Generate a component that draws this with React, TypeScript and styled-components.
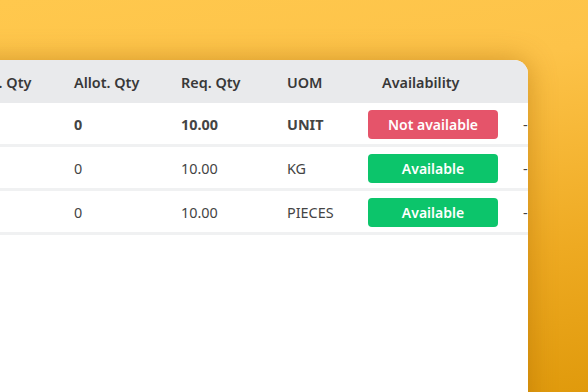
import React from 'react';
import styled, { createGlobalStyle } from 'styled-components';

const GlobalStyle = createGlobalStyle`
  html, body {
    margin: 0;
    padding: 0;
    overflow: hidden;
  }
  body {
    font-family: 'Noto Sans', 'Open Sans', Arial, sans-serif;
  }
`;

const Page = styled.div`
  width: 588px;
  height: 392px;
  overflow: hidden;
  padding-top: 60px;
  box-sizing: border-box;
  background: linear-gradient(170deg, #ffc84d 0%, #fdc349 30%, #eeaa22 70%, #e09a0c 100%);
`;

const Card = styled.div`
  margin-left: -50px;
  width: 578px;
  height: 360px;
  background: #fff;
  border-top-right-radius: 14px;
  overflow: hidden;
  box-shadow: 0 0 28px rgba(160, 95, 0, 0.45);
`;

const Grid = styled.div`
  display: grid;
  grid-template-columns: 112px 107px 106px 81px 155px 80px;
  width: 641px;
`;

const Head = styled.div<{ $indent?: number }>`
  height: 43px;
  display: flex;
  align-items: center;
  padding-left: ${({ $indent }) => $indent ?? 12}px;
  padding-top: 2px;
  box-sizing: border-box;
  background: #e9eaec;
  color: #383838;
  font-size: 14.4px;
  font-weight: 600;
  white-space: nowrap;
`;

const Cell = styled.div<{ $bold?: boolean }>`
  height: 44px;
  display: flex;
  align-items: center;
  padding-left: 12px;
  padding-top: 1px;
  box-sizing: border-box;
  border-bottom: 3px solid #f0f1f2;
  color: #444;
  font-size: 14.4px;
  font-weight: ${({ $bold }) => ($bold ? 700 : 400)};
  white-space: nowrap;
`;

const Badge = styled.span<{ $ok: boolean }>`
  width: 130px;
  height: 29px;
  display: flex;
  align-items: center;
  justify-content: center;
  border-radius: 4px;
  background: ${({ $ok }) => ($ok ? '#0cc56b' : '#e5546a')};
  color: #fff;
  font-size: 14px;
  font-weight: 600;
`;

const rows = [
  { allot: '0', req: '10.00', uom: 'UNIT', ok: false, bold: true },
  { allot: '0', req: '10.00', uom: 'KG', ok: true, bold: false },
  { allot: '0', req: '10.00', uom: 'PIECES', ok: true, bold: false },
];

const App = () => {
  return (
    <>
      <GlobalStyle />
      <Page>
        <Card>
          <Grid>
            <Head $indent={27}>Avl. Qty</Head>
            <Head>Allot. Qty</Head>
            <Head>Req. Qty</Head>
            <Head>UOM</Head>
            <Head $indent={26}>Availability</Head>
            <Head />
            {rows.map((r, i) => (
              <React.Fragment key={i}>
                <Cell $bold={r.bold}></Cell>
                <Cell $bold={r.bold}>{r.allot}</Cell>
                <Cell $bold={r.bold}>{r.req}</Cell>
                <Cell $bold={r.bold}>{r.uom}</Cell>
                <Cell>
                  <Badge $ok={r.ok}>{r.ok ? 'Available' : 'Not available'}</Badge>
                </Cell>
                <Cell>-</Cell>
              </React.Fragment>
            ))}
          </Grid>
        </Card>
      </Page>
    </>
  );
};

export default App;
